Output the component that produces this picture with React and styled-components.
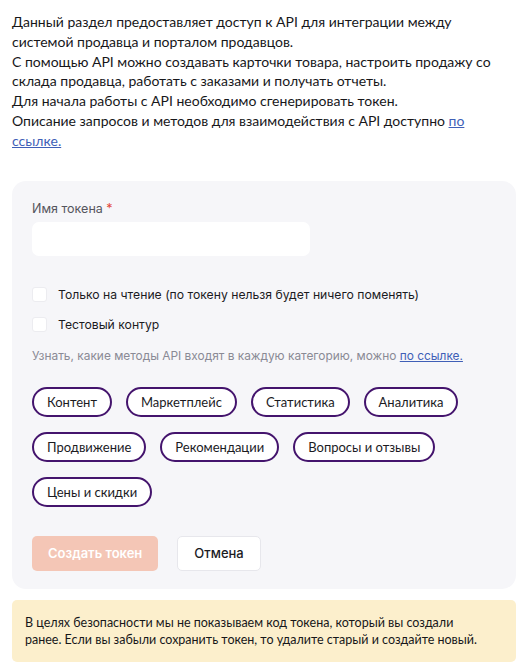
import React from "react";
import styled, { createGlobalStyle } from "styled-components";

const categories = [
  "Контент",
  "Маркетплейс",
  "Статистика",
  "Аналитика",
  "Продвижение",
  "Рекомендации",
  "Вопросы и отзывы",
  "Цены и скидки",
];

const App = () => {
  return (
    <Page>
      <GlobalStyle />
      <Intro>
        Данный раздел предоставляет доступ к API для интеграции между
        системой продавца и порталом продавцов.
        <br />
        С помощью API можно создавать карточки товара, настроить продажу со
        склада продавца, работать с заказами и получать отчеты.
        <br />
        Для начала работы с API необходимо сгенерировать токен.
        <br />
        Описание запросов и методов для взаимодействия с API доступно{" "}
        <Link href="#docs">по ссылке.</Link>
      </Intro>

      <Card>
        <Label>
          Имя токена <Required>*</Required>
        </Label>
        <Input type="text" />

        <Checks>
          <CheckRow>
            <Box />
            Только на чтение (по токену нельзя будет ничего поменять)
          </CheckRow>
          <CheckRow>
            <Box />
            Тестовый контур
          </CheckRow>
        </Checks>

        <Hint>
          Узнать, какие методы API входят в каждую категорию, можно{" "}
          <Link href="#methods">по ссылке.</Link>
        </Hint>

        <Chips>
          {categories.map((c) => (
            <Chip key={c}>{c}</Chip>
          ))}
        </Chips>

        <Actions>
          <PrimaryButton disabled>Создать токен</PrimaryButton>
          <SecondaryButton>Отмена</SecondaryButton>
        </Actions>
      </Card>

      <Notice>
        В целях безопасности мы не показываем код токена, который вы создали
        <br />
        ранее. Если вы забыли сохранить токен, то удалите старый и создайте
        новый.
      </Notice>
    </Page>
  );
};

const GlobalStyle = createGlobalStyle`
  body {
    margin: 0;
    background: #ffffff;
    font-family: Lato, "Noto Sans", sans-serif;
    color: #1b1b1f;
  }
`;

const Page = styled.div`
  width: 504px;
  padding: 12px 14px 0 12px;
  display: flex;
  flex-direction: column;
`;

const Intro = styled.p`
  margin: 0;
  font-size: 14px;
  line-height: 19.8px;
  color: #17171a;
`;

const Link = styled.a`
  color: #3f5fb7;
  text-decoration: underline;
`;

const Card = styled.div`
  margin-top: 30px;
  background: #f6f6f9;
  border-radius: 14px;
  padding: 20px 20px 18px 20px;
  display: flex;
  flex-direction: column;
`;

const Label = styled.div`
  font-family: Inter, sans-serif;
  font-size: 12.5px;
  color: #55555d;
  line-height: 16px;
`;

const Required = styled.span`
  color: #e3473b;
`;

const Input = styled.input`
  margin-top: 5px;
  width: 278px;
  height: 34px;
  box-sizing: border-box;
  border: none;
  border-radius: 7px;
  background: #ffffff;
  outline: none;
`;

const Checks = styled.div`
  margin-top: 31px;
  display: flex;
  flex-direction: column;
  gap: 14px;
`;

const CheckRow = styled.label`
  display: flex;
  align-items: center;
  gap: 11px;
  font-family: Inter, sans-serif;
  font-size: 12.2px;
  color: #1b1b1f;
  line-height: 16px;
`;

const Box = styled.span`
  width: 15px;
  height: 15px;
  box-sizing: border-box;
  background: #ffffff;
  border: 1px solid #ececf0;
  border-radius: 3px;
`;

const Hint = styled.div`
  margin-top: 15px;
  font-family: Inter, sans-serif;
  font-size: 11.9px;
  line-height: 16px;
  color: #8a8a95;
`;

const Chips = styled.div`
  margin-top: 23px;
  display: flex;
  flex-wrap: wrap;
  gap: 15px 14px;
`;

const Chip = styled.button`
  height: 30px;
  padding: 0 13px;
  border: 2px solid #44146d;
  border-radius: 16px;
  background: #ffffff;
  font-family: Lato, sans-serif;
  font-size: 13px;
  color: #1b1b1f;
  cursor: pointer;
`;

const Actions = styled.div`
  margin-top: 29px;
  display: flex;
  gap: 19px;
`;

const PrimaryButton = styled.button`
  height: 35px;
  padding: 0 16px;
  border: none;
  border-radius: 5px;
  background: #f4c6b6;
  color: #ffffff;
  font-family: Inter, sans-serif;
  font-size: 13px;
  font-weight: 600;
`;

const SecondaryButton = styled.button`
  height: 35px;
  padding: 0 16px;
  border: 1px solid #e7e7ec;
  border-radius: 5px;
  background: #ffffff;
  color: #1b1b1f;
  font-family: Inter, sans-serif;
  font-size: 13px;
  font-weight: 500;
`;

const Notice = styled.div`
  margin-top: 11px;
  background: #fcefcc;
  border-radius: 5px;
  padding: 14px 13px;
  font-family: Lato, sans-serif;
  font-size: 12.5px;
  line-height: 17px;
  color: #17171a;
`;

export default App;
